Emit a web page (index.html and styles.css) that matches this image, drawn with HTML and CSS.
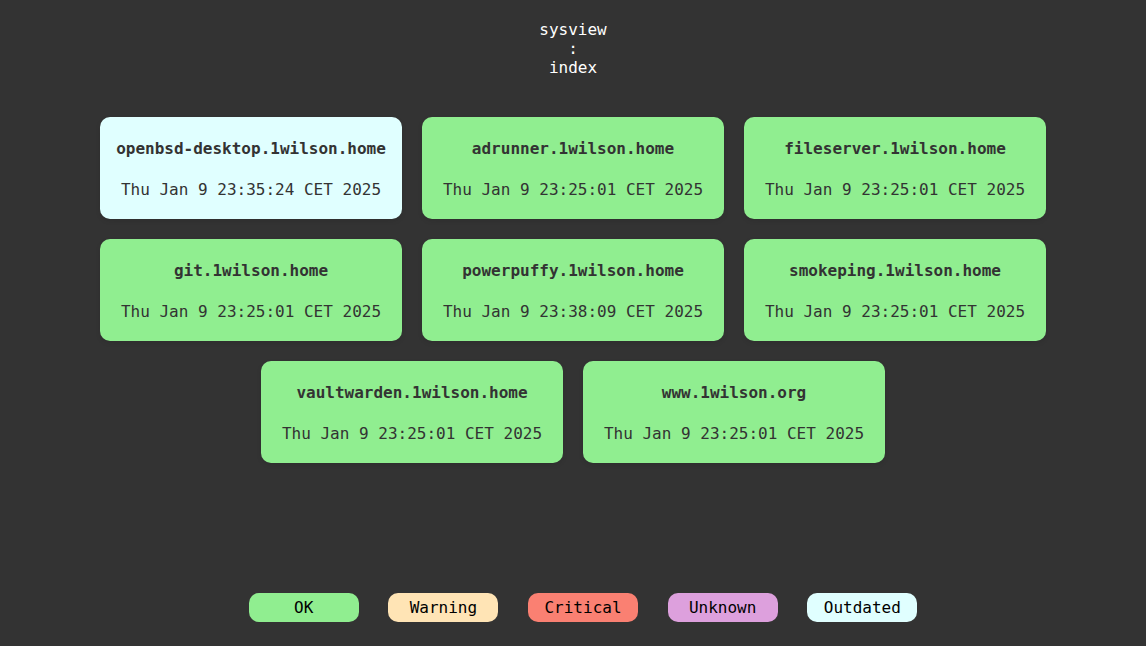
FILE: index.html
```html
<!DOCTYPE html>
<html lang="en">
<head>
<meta charset="utf-8">
<meta name="viewport" content="width=device-width, initial-scale=1">
<title>sysview : index</title>
<link rel="stylesheet" href="styles.css">
</head>
<body>
<header class="header">
  <span>sysview</span>
  <span>:</span>
  <span>index</span>
</header>
<main class="hosts">
  <a class="card outdated" href="#openbsd-desktop"><h2>openbsd-desktop.1wilson.home</h2><p>Thu Jan 9 23:35:24 CET 2025</p></a>
  <a class="card ok" href="#adrunner"><h2>adrunner.1wilson.home</h2><p>Thu Jan 9 23:25:01 CET 2025</p></a>
  <a class="card ok" href="#fileserver"><h2>fileserver.1wilson.home</h2><p>Thu Jan 9 23:25:01 CET 2025</p></a>
  <a class="card ok" href="#git"><h2>git.1wilson.home</h2><p>Thu Jan 9 23:25:01 CET 2025</p></a>
  <a class="card ok" href="#powerpuffy"><h2>powerpuffy.1wilson.home</h2><p>Thu Jan 9 23:38:09 CET 2025</p></a>
  <a class="card ok" href="#smokeping"><h2>smokeping.1wilson.home</h2><p>Thu Jan 9 23:25:01 CET 2025</p></a>
  <a class="card ok" href="#vaultwarden"><h2>vaultwarden.1wilson.home</h2><p>Thu Jan 9 23:25:01 CET 2025</p></a>
  <a class="card ok" href="#www"><h2>www.1wilson.org</h2><p>Thu Jan 9 23:25:01 CET 2025</p></a>
</main>
<footer class="footer">
  <ul class="legend">
    <li class="ok">OK</li>
    <li class="warning">Warning</li>
    <li class="critical">Critical</li>
    <li class="unknown">Unknown</li>
    <li class="outdated">Outdated</li>
  </ul>
</footer>
</body>
</html>
```
FILE: styles.css
```css
* {
  box-sizing: border-box;
}

body {
  display: flex;
  flex-direction: column;
  min-height: 100vh;
  margin: 0;
  background: #333;
  color: #333;
  font: 16px/19px "DejaVu Sans Mono", monospace;
}

.header {
  display: flex;
  flex-direction: column;
  align-items: center;
  padding: 20px;
  color: #fff;
}

.hosts {
  display: flex;
  flex-wrap: wrap;
  justify-content: center;
  gap: 20px;
  padding: 20px;
}

.card {
  width: 302px;
  padding: 22px 16px 20px;
  border-radius: 10px;
  box-shadow: 0 2px 5px rgba(0, 0, 0, 0.1);
  color: #333;
  text-align: center;
  text-decoration: none;
  white-space: nowrap;
}

.card h2 {
  margin: 0 0 22px;
  font-size: 16px;
}

.card p {
  margin: 0;
}

.footer {
  margin-top: auto;
  padding: 20px 20px 24px;
}

.legend {
  margin: 0;
  padding: 0 0 0 20px;
  color: #000;
  list-style: none;
  text-align: center;
}

.legend li {
  display: inline-block;
  width: 110px;
  margin: 0 10px;
  padding: 5px;
  border-radius: 10px;
  vertical-align: top;
}

.ok {
  background: lightgreen;
}

.warning {
  background: moccasin;
}

.critical {
  background: salmon;
}

.unknown {
  background: plum;
}

.outdated {
  background: lightcyan;
}
```
